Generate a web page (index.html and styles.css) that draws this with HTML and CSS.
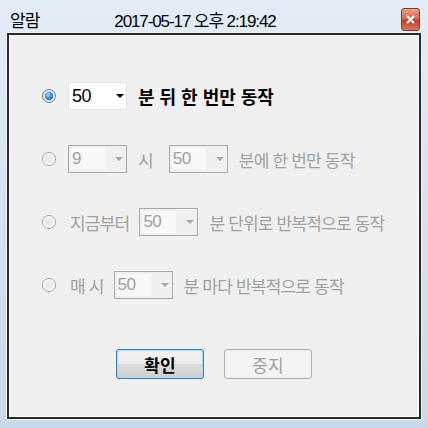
FILE: index.html
```html
<!DOCTYPE html>
<html lang="ko">
<head>
    <meta charset="UTF-8">
    <meta name="viewport" content="width=device-width, initial-scale=1.0">
    <title>알람</title>
    <link rel="stylesheet" href="styles.css">
</head>
<body>
    <div class="window">
        <div class="titlebar">
            <span class="title">알람</span>
            <span class="clock">2017-05-17 오후 2:19:42</span>
            <div class="close-btn">
                <svg width="9" height="9" viewBox="0 0 9 9">
                    <path d="M1.5 1.5 L7.5 7.5 M7.5 1.5 L1.5 7.5" stroke="#fff" stroke-width="2" stroke-linecap="round"/>
                </svg>
            </div>
        </div>
        <div class="client">
            <div class="options">
                <div class="row active">
                    <span class="radio checked"></span>
                    <div class="combo main"><span class="combo-value">50</span><span class="arrow"></span></div>
                    <span class="text">분 뒤 한 번만 동작</span>
                </div>
                <div class="row">
                    <span class="radio"></span>
                    <div class="combo"><span class="combo-value">9</span><span class="arrow"></span></div>
                    <span class="text unit">시</span>
                    <div class="combo"><span class="combo-value">50</span><span class="arrow"></span></div>
                    <span class="text">분에 한 번만 동작</span>
                </div>
                <div class="row">
                    <span class="radio"></span>
                    <span class="text lead">지금부터</span>
                    <div class="combo"><span class="combo-value">50</span><span class="arrow"></span></div>
                    <span class="text">분 단위로 반복적으로 동작</span>
                </div>
                <div class="row">
                    <span class="radio"></span>
                    <span class="text lead">매 시</span>
                    <div class="combo"><span class="combo-value">50</span><span class="arrow"></span></div>
                    <span class="text">분 마다 반복적으로 동작</span>
                </div>
            </div>
            <div class="button-group">
                <button class="btn default">확인</button>
                <button class="btn" disabled>중지</button>
            </div>
        </div>
    </div>
</body>
</html>
```

FILE: styles.css
```css
body {
    margin: 0;
    font-family: 'Liberation Sans', 'Noto Sans CJK KR', sans-serif;
    color: #000;
}
.window {
    width: 428px;
    height: 428px;
    box-sizing: border-box;
    padding: 0 7px 9px 7px;
    display: flex;
    flex-direction: column;
    background: linear-gradient(180deg, #e4edf7 0%, #d6e3f1 40%, #c9d9ea 100%);
}
.titlebar {
    height: 33px;
    flex-shrink: 0;
    display: flex;
    align-items: center;
    position: relative;
}
.title {
    margin-left: 3px;
    font-size: 17px;
    letter-spacing: -1px;
    margin-top: 6px;
}
.clock {
    margin-left: 75px;
    font-size: 17px;
    letter-spacing: -1.1px;
    margin-top: 6px;
}
.close-btn {
    position: absolute;
    right: 1px;
    top: 8px;
    width: 17px;
    height: 21px;
    border: 1px solid #8a3a2a;
    border-radius: 3px;
    background: linear-gradient(180deg, #e7a28c 0%, #d36b4f 45%, #c0432b 55%, #d9775a 100%);
    display: flex;
    align-items: center;
    justify-content: center;
}
.client {
    flex: 1;
    border: 2px solid #2a2a2a;
    background: #f0f0f0;
    box-shadow: inset 0 0 0 1px #fff, 0 0 0 1px #eef4fa;
    display: flex;
    flex-direction: column;
    padding: 46px 0 0 33px;
}
.options {
    display: flex;
    flex-direction: column;
    gap: 33px;
}
.row {
    height: 30px;
    display: flex;
    align-items: center;
    color: #a0a0a0;
    font-size: 17px;
    letter-spacing: -0.8px;
}
.radio {
    width: 14px;
    height: 14px;
    box-sizing: border-box;
    border-radius: 50%;
    border: 1px solid #a3a3a3;
    background: radial-gradient(circle, #e6e6e6 0%, #ededed 45%, #ffffff 60%, #f2f2f2 100%);
    margin-right: 12px;
    flex-shrink: 0;
    display: flex;
    align-items: center;
    justify-content: center;
}
.radio.checked {
    border-color: #7f8388;
    background: radial-gradient(circle, #f2f2f2 0%, #d6d6d6 100%);
}
.radio.checked::after {
    content: '';
    width: 8px;
    height: 8px;
    border-radius: 50%;
    background: radial-gradient(circle at 40% 35%, #a8dcff 0%, #3f8fd6 45%, #15487e 100%);
}
.combo {
    width: 59px;
    height: 28px;
    box-sizing: border-box;
    border: 1px solid #a9a9a9;
    background: #f0f0f0;
    display: flex;
    align-items: center;
    flex-shrink: 0;
    margin-right: 11px;
    padding: 2px;
}
.combo-value {
    width: 33px;
    height: 100%;
    background: #f8f8f8;
    padding-left: 1px;
    display: flex;
    align-items: center;
    letter-spacing: -0.5px;
}
.arrow {
    margin-left: 10px;
    width: 0;
    height: 0;
    border-left: 4px solid transparent;
    border-right: 4px solid transparent;
    border-top: 4px solid #a8a8a8;
}
.combo.main {
    background: #fff;
    border-color: #e2e2e2;
    border-radius: 2px;
}
.combo.main .combo-value {
    background: #fff;
}
.combo.main .arrow {
    border-top-color: #000;
    margin-left: 11px;
}
.row.active {
    color: #000;
    font-weight: bold;
    font-size: 18px;
    letter-spacing: 0;
}
.row.active .combo-value {
    font-weight: normal;
    font-size: 18px;
}
.text.unit {
    margin-right: 16px;
}
.text.lead {
    margin-left: 2px;
    margin-right: 10px;
}
.button-group {
    display: flex;
    justify-content: center;
    gap: 20px;
    margin-top: 49px;
    margin-left: -33px;
}
.btn {
    width: 88px;
    height: 30px;
    box-sizing: border-box;
    border: 1px solid #adb2b5;
    border-radius: 3px;
    background: #f4f4f4;
    color: #a0a0a0;
    font-family: 'Liberation Sans', 'Noto Sans CJK KR', sans-serif;
    font-size: 17px;
    padding: 0;
}
.btn.default {
    border: 1px solid #3c7fb1;
    box-shadow: inset 0 0 0 1px #a6dcf5;
    background: linear-gradient(180deg, #f2f2f2 0%, #ebebeb 50%, #dddddd 51%, #cfcfcf 100%);
    color: #000;
    font-weight: bold;
}
```
